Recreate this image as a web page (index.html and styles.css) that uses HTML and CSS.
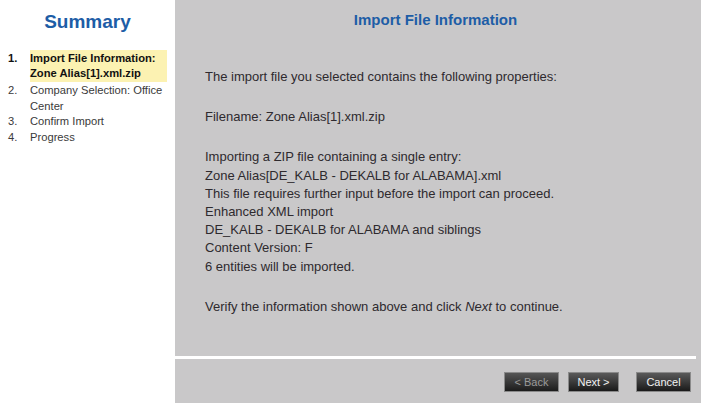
FILE: index.html
```html
<!DOCTYPE html>
<html>
<head>
<meta charset="utf-8">
<link rel="stylesheet" href="styles.css">
</head>
<body>
<div class="wizard">
  <aside class="sidebar">
    <h1 class="sidebar-title">Summary</h1>
    <ol class="steps">
      <li class="step current"><span class="num">1.</span><span class="label">Import File Information: Zone Alias[1].xml.zip</span></li>
      <li class="step"><span class="num">2.</span><span class="label">Company Selection: Office Center</span></li>
      <li class="step"><span class="num">3.</span><span class="label">Confirm Import</span></li>
      <li class="step"><span class="num">4.</span><span class="label">Progress</span></li>
    </ol>
  </aside>
  <main class="panel">
    <div class="content">
      <h2 class="panel-title">Import File Information</h2>
      <p class="para">The import file you selected contains the following properties:</p>
      <p class="para">Filename: Zone Alias[1].xml.zip</p>
      <p class="para">Importing a ZIP file containing a single entry:<br>Zone Alias[DE_KALB - DEKALB for ALABAMA].xml<br>This file requires further input before the import can proceed.<br>Enhanced XML import<br>DE_KALB - DEKALB for ALABAMA and siblings<br>Content Version: F<br>6 entities will be imported.</p>
      <p class="para">Verify the information shown above and click <em>Next</em> to continue.</p>
    </div>
    <div class="divider"></div>
    <div class="buttons">
      <button class="btn disabled">&lt; Back</button>
      <button class="btn">Next &gt;</button>
      <button class="btn cancel">Cancel</button>
    </div>
  </main>
</div>
</body>
</html>
```
FILE: styles.css
```css
* { box-sizing: border-box; }
html, body { margin: 0; padding: 0; background: #ffffff; }
body { font-family: "Liberation Sans", Arial, sans-serif; width: 701px; height: 403px; overflow: hidden; }
.wizard { display: flex; height: 403px; }
.sidebar { width: 175px; flex: none; background: #ffffff; }
.sidebar-title { margin: 0; padding-top: 11px; height: 50px; text-align: center; font-size: 19px; font-weight: bold; color: #1d5da6; line-height: 22px; }
.steps { list-style: none; margin: 0; padding: 0; }
.step { display: flex; font-size: 11.2px; line-height: 15.5px; color: #3a3a3a; }
.step .num { width: 30px; padding-left: 8px; flex: none; }
.step .label { width: 137px; }
.step.current { font-weight: bold; color: #111; line-height: 15px; }
.step.current .num { padding-top: 1px; }
.step.current .label { background: #fcf2b2; padding: 1px 0; margin-bottom: 1px; }
.panel { flex: 1; background: #c9c8c9; display: flex; flex-direction: column; }
.content { height: 356px; padding-right: 5px; }
.panel-title { margin: 0; padding-top: 11px; text-align: center; font-size: 15px; font-weight: bold; color: #1d5da6; line-height: 18px; }
.para { margin: 39px 0 0 30px; font-size: 13px; line-height: 18.2px; color: #2e2a2e; }
.para + .para { margin-top: 22px; }
.para em { font-style: italic; }
.divider { height: 3px; background: #ffffff; margin-right: 5px; }
.buttons { display: flex; justify-content: flex-end; padding: 13px 10px 0 0; }
.btn { height: 20px; font-family: "Liberation Sans", Arial, sans-serif; font-size: 11px; color: #f2f2f2; background: linear-gradient(#5a5a5a, #1a1a1a); border: 1px solid #8a8a8a; padding: 0; margin-left: 9px; width: 51px; }
.btn.disabled { width: 55px; color: #9a9a9a; background: linear-gradient(#555555, #1c1c1c); }
.btn.cancel { width: 55px; margin-left: 17px; }
```
